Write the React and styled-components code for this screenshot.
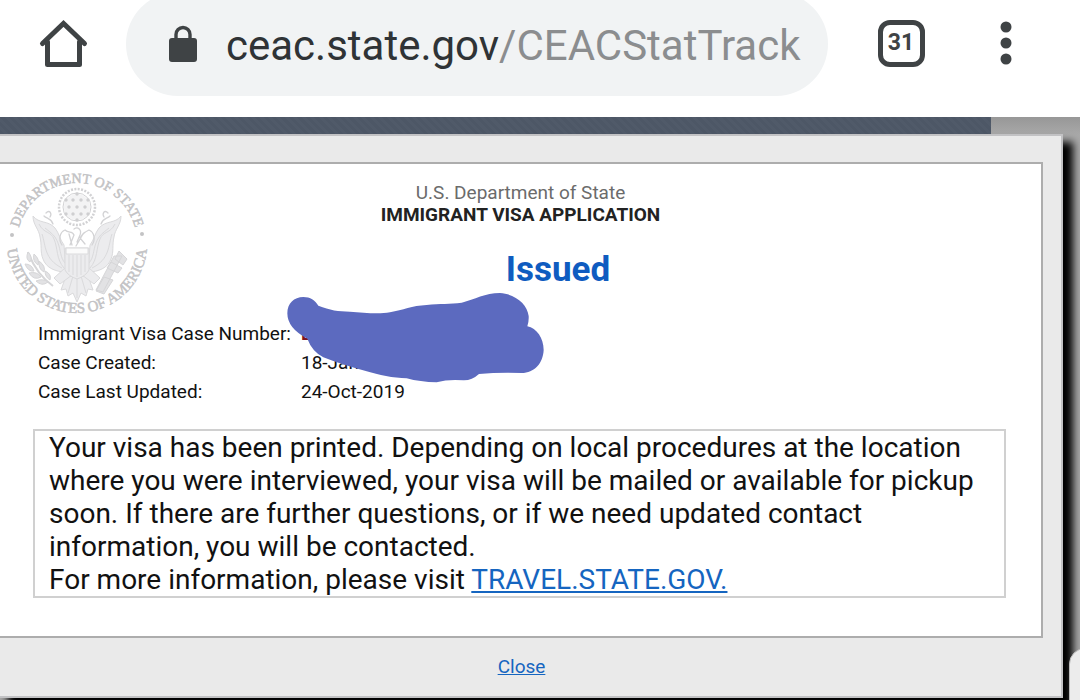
import React from "react";
import styled, { createGlobalStyle } from "styled-components";

const GlobalStyle = createGlobalStyle`
  * { box-sizing: border-box; }
  html, body { margin: 0; padding: 0; }
  body {
    background: #a6a6a6;
    color: #111;
    font-family: Roboto, "Liberation Sans", sans-serif;
    overflow: hidden;
  }
`;

const BrowserBar = styled.header`
  display: flex;
  align-items: flex-start;
  height: 117px;
  padding: 0 58px 0 36px;
  background: #fff;
`;

const IconButton = styled.button`
  display: flex;
  align-items: center;
  justify-content: center;
  flex: none;
  width: ${(p) => p.$width}px;
  height: 86px;
  padding: 0;
  border: 0;
  background: none;
  color: #3f4345;
`;

const AddressBar = styled.button`
  display: flex;
  align-items: center;
  flex: 1;
  min-width: 0;
  height: 104px;
  margin: -8px 46px 0 36px;
  padding: 4px 24px 0 42px;
  border: 0;
  border-radius: 52px;
  background: #f1f3f4;
  color: #2f3336;
  font-family: inherit;
  font-size: 42px;
  line-height: 50px;
  white-space: nowrap;
`;

const LockIcon = styled.svg`
  flex: none;
  margin: -4px 28px 0 0;
`;

const Path = styled.span`
  color: #8b8d8f;
`;

const TabCount = styled.span`
  display: flex;
  align-items: center;
  justify-content: center;
  width: 47px;
  height: 47px;
  border: 5px solid #3f4345;
  border-radius: 12px;
  font: 700 23px/28px Roboto, sans-serif;
`;

const Stage = styled.main`
  position: relative;
  min-height: calc(100vh - 117px);
  overflow: hidden;
  background: linear-gradient(#979797, #a9a9a9 18px);
`;

const Strip = styled.div`
  height: 17px;
  margin-right: 89px;
  background: repeating-linear-gradient(45deg, #4d5766 0 3px, #505a69 3px 6px);
`;

const Dialog = styled.section`
  margin-right: 17px;
  padding: 26px 18px 0 0;
  border: solid #c2c2c4;
  border-width: 2px 2px 2px 0;
  background: #eaeaea;
  box-shadow: 9px 9px 8px 1px #000;
`;

const Card = styled.div`
  padding: 0 35px 38px 0;
  border: 2px solid #adadad;
  border-left: 0;
  background: #fff;
`;

const CardHead = styled.div`
  display: grid;
  grid-template-columns: 160px 1fr 125px;
  min-height: 155px;
`;

const Seal = styled.svg`
  margin-top: 4px;
  color: #d2d2d4;
`;

const SealText = styled.text`
  fill: #c3c3c5;
  stroke: #c3c3c5;
  stroke-width: 0.5px;
  font-family: "Liberation Serif", serif;
  font-size: ${(p) => p.$size}px;
`;

const Titles = styled.div`
  padding-top: 18px;
  text-align: center;
`;

const Agency = styled.p`
  margin: 0;
  color: #6b6b6b;
  font-size: 19px;
  line-height: 22px;
`;

const FormName = styled.h1`
  margin: 0;
  color: #222;
  font-size: 19px;
  line-height: 22px;
`;

const Status = styled.h2`
  margin: 24px 0 0 75px;
  color: #0f5cc0;
  font-size: 35px;
  line-height: 40px;
`;

const CaseInfo = styled.div`
  position: relative;
  padding-left: 38px;
`;

const CaseTable = styled.table`
  border-collapse: collapse;
  font-size: 19px;
  line-height: 29px;

  th, td {
    padding: 0;
    font-weight: 400;
    text-align: left;
  }
  th { width: 263px; }
`;

const CaseNumber = styled.span`
  color: #7d1420;
  font-weight: 700;
`;

const Scribble = styled.svg`
  position: absolute;
  left: 270px;
  top: -39px;
`;

const Message = styled.div`
  margin: 23px 0 0 33px;
  padding: 0 14px;
  border: 2px solid #d0d0d0;
  font-size: 28px;
  line-height: 33px;

  p { margin: 0; }
`;

const Link = styled.a`
  color: #1565c0;
  text-decoration: underline;
`;

const DialogFoot = styled.footer`
  padding: 18px 0;
  font-size: 19px;
  line-height: 22px;
  text-align: center;
`;

const CornerHandle = styled.div`
  position: absolute;
  right: -30px;
  bottom: -20px;
  width: 41px;
  height: 72px;
  border: 1px solid #bbb;
  border-radius: 16px;
  background: #ececec;
`;

function StateSeal() {
  const stars = [
    [71, 52], [79, 52], [67, 59], [75, 59], [83, 59],
    [71, 66], [79, 66], [75, 46], [75, 72], [64, 66], [86, 66], [64, 52], [86, 52],
  ];
  return (
    <Seal width="156" height="150" viewBox="0 0 156 150" role="img" aria-label="Department of State seal">
      <defs>
        <path id="arc-top" d="M 17 75 A 60 60 0 0 1 137 75" />
        <path id="arc-bottom" d="M 7.3 68.5 A 70 70 0 1 0 146.7 68.5" />
      </defs>
      <SealText $size={14} textAnchor="middle">
        <textPath href="#arc-top" startOffset="50%">DEPARTMENT OF STATE</textPath>
      </SealText>
      <SealText $size={15} textAnchor="middle">
        <textPath href="#arc-bottom" startOffset="50%">UNITED STATES OF AMERICA</textPath>
      </SealText>
      <circle cx="12" cy="67" r="2" fill="#c3c3c5" />
      <circle cx="142" cy="66" r="2" fill="#c3c3c5" />
      <g fill="none" stroke="currentColor" transform="translate(2 -20)">
        <circle cx="75" cy="59" r="18" strokeWidth="2.5" strokeDasharray="2 1.4" />
        <circle cx="75" cy="59" r="14" strokeWidth="1" />
        <circle cx="75" cy="59" r="13" fill="#f3f3f4" stroke="none" />
        {stars.map(([x, y]) => (
          <circle key={`${x}-${y}`} cx={x} cy={y} r="1.7" fill="#cfcfd1" stroke="none" />
        ))}
      </g>
      <g fill="#ececee" stroke="#dadadc" strokeLinejoin="round">
        <path d="M33 48c6 8 15 4 22 12 4 5 5 12 9 17l2 27c-10 0-20-4-23-13-3-7-1-14-3-22-1-8-7-12-7-21z" />
        <path d="M121 48c-6 8-15 4-22 12-4 5-5 12-9 17l-2 27c10 0 20-4 23-13 3-7 1-14 3-22 1-8 7-12 7-21z" />
        <path fill="none" d="M39 56c5 10 12 7 15 15 4 9 2 20 10 29M45 60c6 5 10 7 13 15 3 8 2 14 7 20M42 66c4 12 2 25 20 34M115 56c-5 10-12 7-15 15-4 9-2 20-10 29M109 60c-6 5-10 7-13 15-3 8-2 14-7 20M112 66c-4 12-2 25-20 34" />
        <path d="M66 108l-5 14 5-1 2 7 5-3 4 9 4-9 5 3 2-7 5 1-5-14z" />
        <path fill="none" d="M73 108l-5 17M77 108v22M81 108l5 17" />
        <path d="M66 99l-12 11 6 6 12-9zM88 99l12 11-6 6-12-9z" />
        <path d="M65 80h24v22q-3 6-12 9-9-3-12-9z" />
        <path fill="#fbfbfb" d="M66 80h22v6H66z" />
        <path fill="none" d="M69 87v17M73 87v20M77 87v22M81 87v20M85 87v17" />
      </g>
      <g fill="none" stroke="#d3d3d5" strokeWidth="1.3" strokeLinecap="round">
        <path d="M62 77c-4-6-2-13 3-15 4 4 7 0 9 5l-4 10M74 61c4-3 8 1 6 6l-3 7M92 77c4-6 2-13-3-15-4 2-6 3-9 8l5 6M69 66l3 11M83 66l-7 12" />
        <path d="M44 48c3 3 7 2 9 8M46 45c4-4 6 1 4 4M110 48c-3 3-7 2-9 8M108 45c-4-4-6 1-4 4" />
      </g>
      <g fill="#e2e2e4" stroke="#d6d6d8" strokeWidth="1">
        <path fill="none" strokeWidth="2" d="M28 84q8 22 25 34" />
        <path d="M28 84q-3 7 2 10 3-5-2-10zM25 96q3 8 9 7-2-7-9-7zM34 86q-2 7 4 11 2-6-4-11zM29 105q5 8 12 4-4-6-12-4zM39 93q-1 8 5 11 2-6-5-11zM36 113q6 6 12 1-5-4-12-1zM45 103q0 6 5 9 2-6-5-9z" />
        <path d="M122 88l-19 36-7-2 18-34zM119 83l8 8-4 6-8-6zM111 94l11 6-4 5-11-5zM104 109l9 3-9 14-8-3z" />
      </g>
    </Seal>
  );
}

export default function App() {
  return (
    <>
      <GlobalStyle />
      <BrowserBar>
        <IconButton $width={54} aria-label="Home">
          <svg width="54" height="54" viewBox="0 0 54 54" fill="none" stroke="currentColor" strokeWidth="5" strokeLinejoin="round" strokeLinecap="round">
            <path strokeLinejoin="miter" d="M6.500 27.500 27.500 7.500 48.500 27.500" />
            <path d="M11.500 26v22.500h32V26" />
          </svg>
        </IconButton>
        <AddressBar aria-label="Address">
          <LockIcon width="30" height="38" viewBox="0 0 30 38" aria-hidden="true">
            <path d="M8 15V9.500a7 7 0 0 1 14 0V15" fill="none" stroke="#3f4345" strokeWidth="3.400" />
            <rect x="1" y="13" width="28" height="24" rx="3" fill="#3f4345" />
          </LockIcon>
          <span>ceac.state.gov<Path>/CEACStatTrack</Path></span>
        </AddressBar>
        <IconButton $width={54} aria-label="Open tabs">
          <TabCount>31</TabCount>
        </IconButton>
        <IconButton $width={94} aria-label="Menu">
          <svg width="94" height="54" viewBox="0 0 94 54" fill="currentColor">
            <circle cx="78" cy="11" r="5.500" />
            <circle cx="78" cy="27" r="5.500" />
            <circle cx="78" cy="43" r="5.500" />
          </svg>
        </IconButton>
      </BrowserBar>
      <Stage>
        <Strip />
        <Dialog role="dialog" aria-label="Visa status">
          <Card>
            <CardHead>
              <StateSeal />
              <Titles>
                <Agency>U.S. Department of State</Agency>
                <FormName>IMMIGRANT VISA APPLICATION</FormName>
                <Status>Issued</Status>
              </Titles>
            </CardHead>
            <CaseInfo>
              <CaseTable>
                <tbody>
                  <tr>
                    <th scope="row">Immigrant Visa Case Number:</th>
                    <td><CaseNumber>L</CaseNumber></td>
                  </tr>
                  <tr>
                    <th scope="row">Case Created:</th>
                    <td>18-Jan-</td>
                  </tr>
                  <tr>
                    <th scope="row">Case Last Updated:</th>
                    <td>24-Oct-2019</td>
                  </tr>
                </tbody>
              </CaseTable>
              <Scribble width="300" height="130" viewBox="0 0 900 390" aria-hidden="true">
                <path
                  fill="#5c6abf"
                  d="M52 100C52 70 72 51 100 51C121 51 135 60 145 77C180 91 205 94 240 95C280 98 325 103 360 97C400 90 425 77 470 75C510 70 540 73 575 68C615 58 645 39 690 39C735 42 772 72 776 108Q777 125 772 139C800 145 821 174 821 210C819 250 793 279 755 279Q690 276 627 282Q605 302 580 301Q535 297 500 307Q450 306 410 295C370 295 325 284 290 274Q215 254 160 232Q126 214 112 176Q52 145 52 100Z"
                />
              </Scribble>
            </CaseInfo>
            <Message>
              <p>
                Your visa has been printed. Depending on local procedures at the location
                where you were interviewed, your visa will be mailed or available for pickup
                soon. If there are further questions, or if we need updated contact
                information, you will be contacted.
              </p>
              <p>
                For more information, please visit <Link href="#travel">TRAVEL.STATE.GOV.</Link>
              </p>
            </Message>
          </Card>
          <DialogFoot>
            <Link href="#close">Close</Link>
          </DialogFoot>
        </Dialog>
        <CornerHandle />
      </Stage>
    </>
  );
}
